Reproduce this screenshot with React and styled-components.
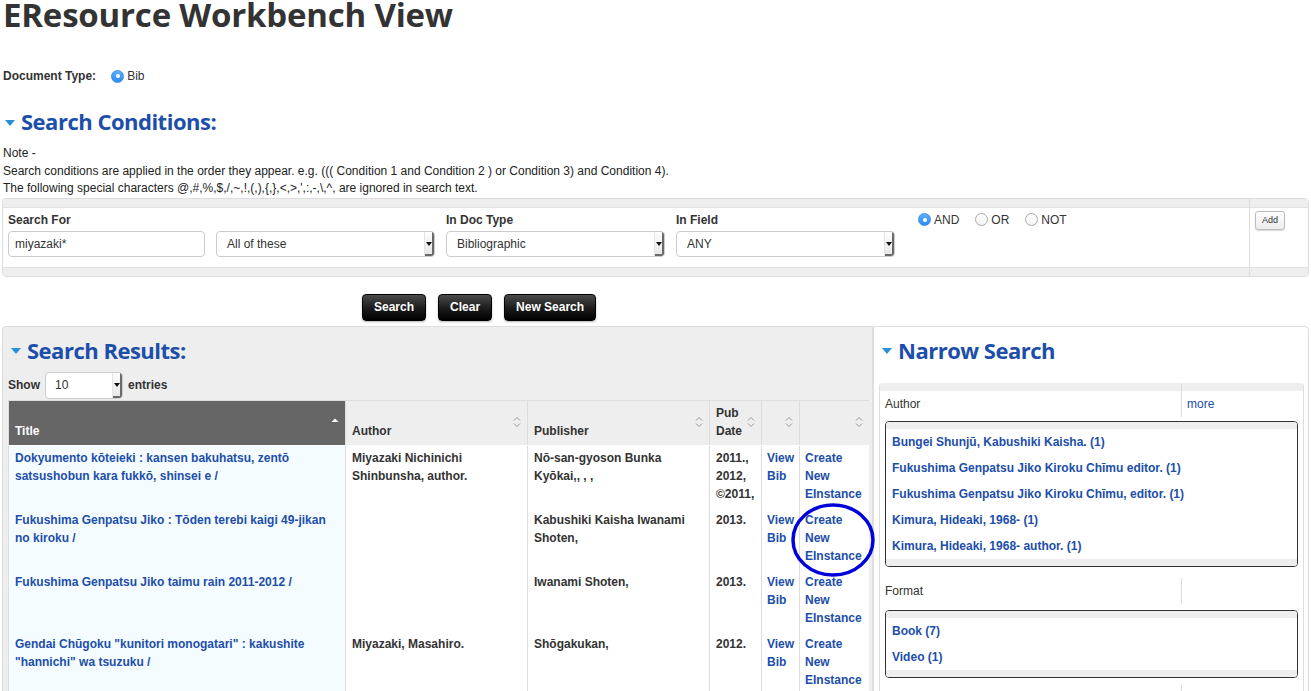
import React from 'react';
import styled, { createGlobalStyle } from 'styled-components';

const GlobalStyle = createGlobalStyle`
  html, body { margin: 0; padding: 0; background: #fff; }
  body {
    font-family: "Liberation Sans", Arial, Helvetica, sans-serif;
    font-size: 12px;
    color: #333;
  }
  * { box-sizing: border-box; }
`;

const BLUE = '#1c4eaa';
const TRI = '#2a8fd8';

const Page = styled.div`
  position: relative;
  width: 1311px;
  height: 691px;
  overflow: hidden;
  padding: 0 2px;
`;

const PageTitle = styled.h1`
  margin: 0 0 0 1px;
  padding: 0;
  font-family: "Open Sans", sans-serif;
  font-weight: 700;
  font-size: 33px;
  line-height: 30px;
  color: #333;
  letter-spacing: -0.2px;
`;

const DocTypeRow = styled.div`
  display: flex;
  align-items: center;
  height: 16px;
  margin-top: 38px;
  padding-left: 1px;
`;

const BoldLabel = styled.span`
  font-weight: 700;
  font-size: 12px;
`;

const RadioItem = styled.label`
  display: inline-flex;
  align-items: center;
  gap: 3px;
  margin-left: ${p => p.$ml || 0}px;
  font-size: 12px;
  color: #333;
`;

const RadioDot = styled.span`
  width: 13px;
  height: 13px;
  border-radius: 50%;
  display: inline-flex;
  align-items: center;
  justify-content: center;
  background: ${p => (p.$on ? 'linear-gradient(#5eaefc, #2d8cf5)' : 'linear-gradient(#fff, #f3f3f3)')};
  border: 1px solid ${p => (p.$on ? '#3a8ee8' : '#aaa')};
  &::after {
    content: '';
    display: ${p => (p.$on ? 'block' : 'none')};
    width: 4px;
    height: 4px;
    border-radius: 50%;
    background: #fff;
  }
`;

const SectionHeading = styled.h2`
  display: flex;
  align-items: center;
  gap: 6px;
  margin: ${p => p.$m || '0'};
  font-family: "Open Sans", sans-serif;
  font-weight: 700;
  font-size: 22px;
  line-height: 28px;
  color: ${BLUE};
  letter-spacing: -0.5px;
  &::before {
    content: '';
    width: 0;
    height: 0;
    border-left: 5.5px solid transparent;
    border-right: 5.5px solid transparent;
    border-top: 6px solid ${TRI};
    margin-top: 3px;
  }
`;

const Note = styled.div`
  margin-top: 10px;
  padding-left: 1px;
  font-size: 12px;
  line-height: 17.5px;
  color: #222;
`;

const ConditionBox = styled.div`
  display: grid;
  grid-template-columns: 1fr 59px;
  grid-template-rows: 9px 59px 9px;
  border: 1px solid #ddd;
  border-radius: 4px;
  overflow: hidden;
`;

const Strip = styled.div`
  background: #eee;
  border-left: ${p => (p.$divider ? '1px solid #ddd' : 'none')};
  border-top: ${p => (p.$bottom ? '1px solid #e2e2e2' : 'none')};
  border-bottom: ${p => (p.$top ? '1px solid #e2e2e2' : 'none')};
`;

const FieldsCell = styled.div`
  display: flex;
  align-items: flex-start;
  gap: 11px;
  padding: 5px 0 0 5px;
`;

const AddCell = styled.div`
  border-left: 1px solid #ddd;
  padding: 3px 0 0 5px;
`;

const Field = styled.div`
  display: flex;
  flex-direction: column;
  gap: 4px;
  width: ${p => p.$w}px;
`;

const FieldLabel = styled.span`
  font-weight: 700;
  font-size: 12px;
  line-height: 14px;
  height: 14px;
`;

const TextInput = styled.div`
  height: 26px;
  border: 1px solid #ccc;
  border-radius: 4px;
  padding-left: 6px;
  line-height: 24px;
  font-size: 12px;
  color: #333;
  background: #fff;
`;

const SelectBox = styled.div`
  display: flex;
  height: ${p => p.$h || 26}px;
  width: ${p => p.$w ? `${p.$w}px` : 'auto'};
  border: 1px solid #ccc;
  border-radius: 4px;
  background: #fff;
  overflow: hidden;
`;

const SelectText = styled.span`
  flex: 1;
  padding-left: ${p => p.$pl || 10}px;
  line-height: ${p => (p.$h || 26) - 2}px;
  font-size: 12px;
  color: #333;
`;

const SelectArrow = styled.span`
  width: 10px;
  border-left: 1px solid #e4e4e4;
  background: linear-gradient(#fdfdfd, #e6e6e6);
  box-shadow: inset -2px -2px 0 #6a6a6a;
  display: flex;
  align-items: center;
  justify-content: center;
  padding-right: 2px;
  &::after {
    content: '';
    border-left: 3px solid transparent;
    border-right: 3px solid transparent;
    border-top: 4px solid #111;
  }
`;

const RadioGroup = styled.div`
  display: flex;
  align-items: center;
  margin-left: 12px;
  height: 14px;
`;

const SmallButton = styled.button`
  height: 19px;
  width: 30px;
  padding: 0;
  font-family: "Liberation Sans", Arial, sans-serif;
  font-size: 9px;
  color: #333;
  background: linear-gradient(#fff, #ececec);
  border: 1px solid #bbb;
  border-radius: 3px;
  box-shadow: 0 1px 1px rgba(0,0,0,0.15);
`;

const ButtonRow = styled.div`
  display: flex;
  gap: 12px;
  margin-top: 17px;
  padding-left: 360px;
`;

const DarkButton = styled.button`
  height: 27px;
  padding: 0 11px;
  font-family: "Liberation Sans", Arial, sans-serif;
  font-size: 12px;
  font-weight: 700;
  color: #fff;
  background: linear-gradient(#4a4a4a, #1a1a1a 55%, #000);
  border: 1px solid #000;
  border-radius: 4px;
  box-shadow: 0 1px 2px rgba(0,0,0,0.3);
`;

const Main = styled.div`
  display: flex;
  margin-top: 5px;
  align-items: flex-start;
`;

const ResultsPanel = styled.div`
  width: 871px;
  height: 400px;
  background: #eee;
  border: 1px solid #ddd;
  border-radius: 4px 0 0 0;
  padding: 9px 3px 0 5px;
`;

const NarrowPanel = styled.div`
  width: 436px;
  height: 400px;
  background: #fff;
  border: 1px solid #ddd;
  border-radius: 0 4px 0 0;
  padding: 9px 4px 0 5px;
`;

const ShowRow = styled.div`
  display: flex;
  align-items: center;
  gap: 5px;
  margin-top: 8px;
`;

const ResultsTable = styled.table`
  margin-top: 1px;
  width: 860px;
  border-collapse: collapse;
  table-layout: fixed;
  border-left: 1px solid #ddd;
`;

const HeadCell = styled.th`
  position: relative;
  height: 45px;
  padding: 0 6px 5px;
  vertical-align: bottom;
  text-align: left;
  font-weight: 700;
  font-size: 12px;
  line-height: 18px;
  color: ${p => (p.$active ? '#fff' : '#333')};
  background: ${p => (p.$active ? '#666' : '#eee')};
  border-left: 1px solid #ddd;
  border-top: 1px solid #ddd;
  border-bottom: 1px solid #fff;
`;

const SortIcon = styled.span`
  position: absolute;
  right: 6px;
  top: 15px;
  display: flex;
`;

const Cell = styled.td`
  vertical-align: top;
  height: 62px;
  padding: 3px ${p => p.$pr || 6}px 5px ${p => p.$pl || 6}px;
  font-weight: 700;
  font-size: 12px;
  line-height: 18px;
  color: #333;
  background: ${p => (p.$tint ? '#f5fcff' : '#fff')};
  border-left: 1px solid #ddd;
`;

const Link = styled.a`
  color: ${BLUE};
  text-decoration: none;
  font-weight: ${p => (p.$regular ? 400 : 700)};
`;

const FacetTable = styled.div`
  margin-top: 19px;
  border-left: 1px solid #ddd;
  border-right: 1px solid #ddd;
  border-radius: 4px 4px 0 0;
`;

const FacetTopStrip = styled.div`
  height: 8px;
  background: #eee;
  border-radius: 4px 4px 0 0;
  display: grid;
  grid-template-columns: 301px 1fr;
  &::after {
    content: '';
    grid-column: 2;
    border-left: 1px solid #ddd;
  }
`;

const FacetHeadRow = styled.div`
  display: grid;
  grid-template-columns: 301px 1fr;
  height: 26px;
  margin-top: ${p => p.$mt || 0}px;
  font-size: 12px;
  line-height: 26px;
`;

const FacetName = styled.div`
  padding-left: 5px;
  color: #333;
`;

const FacetMore = styled.div`
  border-left: 1px solid #ddd;
  padding-left: 5px;
`;

const FacetBox = styled.div`
  margin: ${p => p.$mt || 4}px 5px 0 5px;
  border: 1px solid #333;
  border-radius: 4px;
  overflow: hidden;
  &::before, &::after {
    content: '';
    display: block;
    height: 7px;
    background: #eee;
  }
`;

const FacetItem = styled.div`
  height: 26px;
  line-height: 26px;
  padding-left: 6px;
`;

const Annotation = styled.svg`
  position: absolute;
  left: 790px;
  top: 502px;
  pointer-events: none;
`;

const Chevrons = ({ color = '#999' }) => (
  <svg width="8" height="12" viewBox="0 0 8 12">
    <path d="M1 4.5 L4 1.5 L7 4.5" fill="none" stroke={color} strokeWidth="1" />
    <path d="M1 7.5 L4 10.5 L7 7.5" fill="none" stroke={color} strokeWidth="1" />
  </svg>
);

const UpTri = () => (
  <svg width="8" height="12" viewBox="0 0 8 12">
    <path d="M0.5 6 L4 2.5 L7.5 6 Z" fill="#fff" />
  </svg>
);

const NOTE_1 = 'Note -';
const NOTE_2 = 'Search conditions are applied in the order they appear. e.g. ((( Condition 1 and Condition 2 ) or Condition 3) and Condition 4).';
const NOTE_3 = "The following special characters @,#,%,$,/,~,!,(,),{,},<,>,',:,-,\\,^, are ignored in search text.";

const rows = [
  {
    title: 'Dokyumento kōteieki : kansen bakuhatsu, zentō satsushobun kara fukkō, shinsei e /',
    author: 'Miyazaki Nichinichi Shinbunsha, author.',
    publisher: 'Nō-san-gyoson Bunka Kyōkai,, , ,',
    date: '2011., 2012, ©2011,',
  },
  {
    title: 'Fukushima Genpatsu Jiko : Tōden terebi kaigi 49-jikan no kiroku /',
    author: '',
    publisher: 'Kabushiki Kaisha Iwanami Shoten,',
    date: '2013.',
  },
  {
    title: 'Fukushima Genpatsu Jiko taimu rain 2011-2012 /',
    author: '',
    publisher: 'Iwanami Shoten,',
    date: '2013.',
  },
  {
    title: 'Gendai Chūgoku "kunitori monogatari" : kakushite "hannichi" wa tsuzuku /',
    author: 'Miyazaki, Masahiro.',
    publisher: 'Shōgakukan,',
    date: '2012.',
  },
];

const authors = [
  'Bungei Shunjū, Kabushiki Kaisha. (1)',
  'Fukushima Genpatsu Jiko Kiroku Chīmu editor. (1)',
  'Fukushima Genpatsu Jiko Kiroku Chīmu, editor. (1)',
  'Kimura, Hideaki, 1968- (1)',
  'Kimura, Hideaki, 1968- author. (1)',
];

const formats = ['Book (7)', 'Video (1)'];

export default function App() {
  return (
    <Page>
      <GlobalStyle />
      <PageTitle>EResource Workbench View</PageTitle>

      <DocTypeRow>
        <BoldLabel>Document Type:</BoldLabel>
        <RadioItem $ml={15}>
          <RadioDot $on />
          Bib
        </RadioItem>
      </DocTypeRow>

      <SectionHeading $m="23px 0 0 3px">Search Conditions:</SectionHeading>

      <Note>
        {NOTE_1}<br />
        {NOTE_2}<br />
        {NOTE_3}
      </Note>

      <ConditionBox>
        <Strip $top />
        <Strip $top $divider />
        <FieldsCell>
          <Field $w={197}>
            <FieldLabel>Search For</FieldLabel>
            <TextInput>miyazaki*</TextInput>
          </Field>
          <Field $w={219}>
            <FieldLabel />
            <SelectBox>
              <SelectText>All of these</SelectText>
              <SelectArrow />
            </SelectBox>
          </Field>
          <Field $w={219}>
            <FieldLabel>In Doc Type</FieldLabel>
            <SelectBox>
              <SelectText>Bibliographic</SelectText>
              <SelectArrow />
            </SelectBox>
          </Field>
          <Field $w={219}>
            <FieldLabel>In Field</FieldLabel>
            <SelectBox>
              <SelectText>ANY</SelectText>
              <SelectArrow />
            </SelectBox>
          </Field>
          <RadioGroup>
            <RadioItem>
              <RadioDot $on />
              AND
            </RadioItem>
            <RadioItem $ml={16}>
              <RadioDot />
              OR
            </RadioItem>
            <RadioItem $ml={16}>
              <RadioDot />
              NOT
            </RadioItem>
          </RadioGroup>
        </FieldsCell>
        <AddCell>
          <SmallButton>Add</SmallButton>
        </AddCell>
        <Strip $bottom />
        <Strip $bottom $divider />
      </ConditionBox>

      <ButtonRow>
        <DarkButton>Search</DarkButton>
        <DarkButton>Clear</DarkButton>
        <DarkButton>New Search</DarkButton>
      </ButtonRow>

      <Main>
        <ResultsPanel>
          <SectionHeading $m="0 0 0 3px">Search Results:</SectionHeading>
          <ShowRow>
            <BoldLabel>Show</BoldLabel>
            <SelectBox $w={78} $h={27}>
              <SelectText $h={27} $pl={9}>10</SelectText>
              <SelectArrow />
            </SelectBox>
            <BoldLabel>entries</BoldLabel>
          </ShowRow>
          <ResultsTable>
            <colgroup>
              <col style={{ width: 337 }} />
              <col style={{ width: 182 }} />
              <col style={{ width: 182 }} />
              <col style={{ width: 52 }} />
              <col style={{ width: 38 }} />
              <col style={{ width: 69 }} />
            </colgroup>
            <thead>
              <tr>
                <HeadCell $active>
                  Title
                  <SortIcon><UpTri /></SortIcon>
                </HeadCell>
                <HeadCell>
                  Author
                  <SortIcon><Chevrons /></SortIcon>
                </HeadCell>
                <HeadCell>
                  Publisher
                  <SortIcon><Chevrons /></SortIcon>
                </HeadCell>
                <HeadCell>
                  Pub Date
                  <SortIcon><Chevrons /></SortIcon>
                </HeadCell>
                <HeadCell>
                  <SortIcon><Chevrons /></SortIcon>
                </HeadCell>
                <HeadCell>
                  <SortIcon><Chevrons /></SortIcon>
                </HeadCell>
              </tr>
            </thead>
            <tbody>
              {rows.map((r, i) => (
                <tr key={i}>
                  <Cell $tint $pr={10}>
                    <Link href="#">{r.title}</Link>
                  </Cell>
                  <Cell>{r.author}</Cell>
                  <Cell>{r.publisher}</Cell>
                  <Cell>{r.date}</Cell>
                  <Cell $pl={5} $pr={2}>
                    <Link href="#">View Bib</Link>
                  </Cell>
                  <Cell $pl={5} $pr={2}>
                    <Link href="#">Create New EInstance</Link>
                  </Cell>
                </tr>
              ))}
            </tbody>
          </ResultsTable>
        </ResultsPanel>

        <NarrowPanel>
          <SectionHeading $m="0 0 0 3px">Narrow Search</SectionHeading>
          <FacetTable>
            <FacetTopStrip />
            <FacetHeadRow>
              <FacetName>Author</FacetName>
              <FacetMore><Link href="#" $regular>more</Link></FacetMore>
            </FacetHeadRow>
            <FacetBox $mt={4}>
              {authors.map(a => (
                <FacetItem key={a}><Link href="#">{a}</Link></FacetItem>
              ))}
            </FacetBox>
            <FacetHeadRow $mt={11}>
              <FacetName>Format</FacetName>
              <FacetMore />
            </FacetHeadRow>
            <FacetBox $mt={6}>
              {formats.map(a => (
                <FacetItem key={a}><Link href="#">{a}</Link></FacetItem>
              ))}
            </FacetBox>
            <FacetHeadRow $mt={7}>
              <FacetName />
              <FacetMore />
            </FacetHeadRow>
          </FacetTable>
        </NarrowPanel>
      </Main>

      <Annotation width="86" height="76" viewBox="0 0 86 76">
        <ellipse cx="43" cy="38" rx="40" ry="35" fill="none" stroke="#0000dd" strokeWidth="3.5" />
      </Annotation>
    </Page>
  );
}
